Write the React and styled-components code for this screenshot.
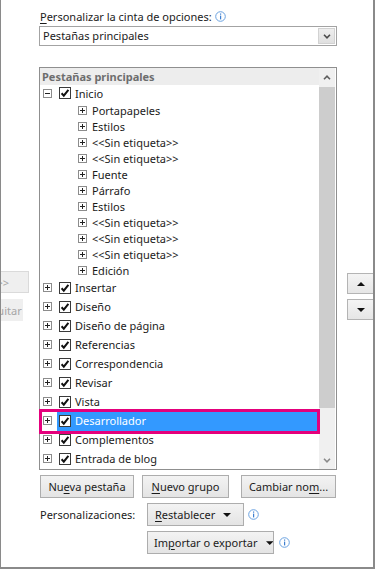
import styled, { createGlobalStyle } from "styled-components";

const GlobalStyle = createGlobalStyle`
  html, body { margin: 0; padding: 0; background: #fff; }
  body {
    font-family: "Noto Sans", "Open Sans", sans-serif;
    font-size: 11px;
    color: #1b1b1b;
  }
  * { box-sizing: border-box; }
`;

const Frame = styled.div`
  width: 375px;
  height: 569px;
  border-left: 1px solid #8a8a8a;
  border-right: 2px solid #8a8a8a;
  border-bottom: 2px solid #8a8a8a;
  display: grid;
  grid-template-columns: 28px 298px 26px;
  column-gap: 10px;
  overflow: hidden;
`;

const SideColumn = styled.div`
  display: flex;
  flex-direction: column;
  align-items: ${(p) => p.$align};
  gap: ${(p) => p.$gap}px;
  padding-top: ${(p) => p.$top}px;
  min-width: 0;
`;

const CutButton = styled.div`
  flex-shrink: 0;
  width: ${(p) => p.$w}px;
  height: 22px;
  margin-right: ${(p) => p.$mr || 0}px;
  display: flex;
  align-items: center;
  justify-content: center;
  white-space: nowrap;
  background: #efefef;
  border: 1px solid ${(p) => (p.$bare ? "#efefef" : "#dadada")};
  color: #a6a6a6;
`;

const ArrowButton = styled.div`
  width: 27px;
  height: 21px;
  display: flex;
  align-items: center;
  justify-content: center;
  background: linear-gradient(#f4f4f4, #e6e6e6);
  border: 1px solid #b4b4b4;
`;

const Main = styled.div`
  display: flex;
  flex-direction: column;
  padding-top: 8px;
  min-width: 0;
`;

const Label = styled.div`
  display: flex;
  align-items: center;
  gap: 3px;
  height: 16px;
  padding-left: 1px;
`;

const Key = styled.u`
  text-decoration: underline;
  text-underline-offset: 2px;
`;

const Dropdown = styled.div`
  margin-top: 2px;
  height: 20px;
  border: 1px solid #a3a3a3;
  display: flex;
`;

const DropdownText = styled.div`
  flex: 1;
  padding-left: 3px;
  line-height: 18px;
`;

const DropdownArrow = styled.div`
  width: 17px;
  margin: 1px;
  display: flex;
  align-items: center;
  justify-content: center;
  background: linear-gradient(#eeeeee, #e0e0e0);
  border: 1px solid #d2d2d2;
`;

const ListBox = styled.div`
  margin-top: 21px;
  height: 403px;
  border: 1px solid #8f8f8f;
  display: flex;
`;

const Tree = styled.div`
  flex: 1;
  display: flex;
  flex-direction: column;
  min-width: 0;
`;

const TreeHeader = styled.div`
  height: 17px;
  line-height: 17px;
  padding-left: 2px;
  background: #ededed;
  color: #6d6d6d;
  font-weight: 700;
`;

const TabRow = styled.div`
  position: relative;
  display: flex;
  height: ${(p) => p.$h}px;
  flex-shrink: 0;
`;

const ToggleSlot = styled.div`
  width: 17px;
  padding: 0 0 2px 3px;
  display: flex;
  align-items: center;
`;

const SelectArea = styled.div`
  flex: 1;
  display: flex;
  align-items: center;
  gap: 4px;
  padding: 0 0 2px 2px;
  background: ${(p) => (p.$selected ? "#3399ff" : "transparent")};
  color: ${(p) => (p.$selected ? "#fff" : "inherit")};
`;

const GroupRow = styled.div`
  display: flex;
  align-items: center;
  gap: 5px;
  height: 16px;
  flex-shrink: 0;
  padding: 0 0 1px 38px;
`;

const Highlight = styled.div`
  position: absolute;
  top: -3px;
  bottom: -3px;
  left: -1px;
  right: -1px;
  border: 3px solid #e4007c;
  pointer-events: none;
`;

const Scrollbar = styled.div`
  width: 16px;
  margin-right: 1px;
  display: flex;
  flex-direction: column;
  background: #f0f0f0;
`;

const ScrollCell = styled.div`
  height: ${(p) => p.$h}px;
  display: flex;
  align-items: center;
  justify-content: center;
  flex-shrink: 0;
`;

const Thumb = styled.div`
  height: 321px;
  margin-top: 1px;
  background: #cdcdcd;
`;

const Spacer = styled.div`
  flex: 1;
`;

const ButtonRow = styled.div`
  margin-top: 5px;
  display: flex;
  gap: 8px;
  padding: 0 1px;
`;

const Button = styled.button`
  width: ${(p) => p.$w}px;
  height: 23px;
  margin-left: ${(p) => (p.$push ? "auto" : "0")};
  padding: 0 0 0 ${(p) => p.$pad || 0}px;
  display: flex;
  align-items: center;
  justify-content: ${(p) => (p.$pad ? "flex-start" : "center")};
  gap: 8px;
  font: inherit;
  color: #1b1b1b;
  white-space: nowrap;
  background: linear-gradient(#f3f3f3, #e4e4e4);
  border: 1px solid #adadad;
  border-radius: 0;
`;

const Customize = styled.div`
  margin-top: 5px;
  display: grid;
  grid-template-columns: 108px auto;
  row-gap: 5px;
  align-items: center;
`;

const CustomizeLabel = styled.div`
  padding-left: 1px;
`;

const Group = styled.div`
  display: flex;
  align-items: center;
  gap: ${(p) => p.$gap}px;
`;

const InfoIcon = () => (
  <svg width="11" height="11" viewBox="0 0 11 11">
    <circle cx="5.5" cy="5.5" r="4.8" fill="#fff" stroke="#6aa2e0" />
    <rect x="5" y="2.5" width="1.2" height="1.2" fill="#3d7fd0" />
    <rect x="5" y="4.6" width="1.2" height="3.8" fill="#3d7fd0" />
  </svg>
);

const Expander = ({ minus }) => (
  <svg width="9" height="9" viewBox="0 0 9 9">
    <rect x="0.5" y="0.5" width="8" height="8" fill="#fff" stroke="#8c8c8c" />
    <path d={minus ? "M2 4.5H7" : "M2 4.5H7M4.5 2V7"} stroke="#222" strokeWidth="1" />
  </svg>
);

const Check = () => (
  <svg width="12" height="12" viewBox="0 0 12 12">
    <rect x="0.5" y="0.5" width="11" height="11" fill="#fff" stroke="#3a3a3a" />
    <path d="M2.6 6.2L4.8 8.6L9.4 2.8" fill="none" stroke="#111" strokeWidth="2" />
  </svg>
);

const Chevron = ({ up, color }) => (
  <svg width="8" height="5" viewBox="0 0 8 5">
    <path
      d={up ? "M1 4.2L4 1.2L7 4.2" : "M1 0.8L4 3.8L7 0.8"}
      fill="none"
      stroke={color}
      strokeWidth="1.6"
    />
  </svg>
);

const Triangle = ({ up }) => (
  <svg width="8" height="4" viewBox="0 0 8 4">
    <polygon points={up ? "0,4 8,4 4,0" : "0,0 8,0 4,4"} fill="#111" />
  </svg>
);

const groups = [
  "Portapapeles",
  "Estilos",
  "<<Sin etiqueta>>",
  "<<Sin etiqueta>>",
  "Fuente",
  "Párrafo",
  "Estilos",
  "<<Sin etiqueta>>",
  "<<Sin etiqueta>>",
  "<<Sin etiqueta>>",
  "Edición",
];

const tabs = [
  "Insertar",
  "Diseño",
  "Diseño de página",
  "Referencias",
  "Correspondencia",
  "Revisar",
  "Vista",
  "Desarrollador",
  "Complementos",
  "Entrada de blog",
];

const Tab = ({ name, height, minus, selected }) => (
  <TabRow $h={height}>
    <ToggleSlot>
      <Expander minus={minus} />
    </ToggleSlot>
    <SelectArea $selected={selected}>
      <Check />
      <span>{name}</span>
    </SelectArea>
    {selected && <Highlight />}
  </TabRow>
);

export default function App() {
  return (
    <>
      <GlobalStyle />
      <Frame>
        <SideColumn $align="flex-end" $gap={6} $top={271}>
          <CutButton $w={97}>Agregar &gt;&gt;</CutButton>
          <CutButton $w={51} $mr={6} $bare>
            &lt;&lt; Quitar
          </CutButton>
        </SideColumn>

        <Main>
          <Label>
            <span>
              <Key>P</Key>ersonalizar la cinta de opciones:
            </span>
            <InfoIcon />
          </Label>
          <Dropdown>
            <DropdownText>Pestañas principales</DropdownText>
            <DropdownArrow>
              <Chevron color="#4a4a4a" />
            </DropdownArrow>
          </Dropdown>

          <ListBox>
            <Tree>
              <TreeHeader>Pestañas principales</TreeHeader>
              <Tab name="Inicio" height={18} minus />
              {groups.map((g, i) => (
                <GroupRow key={i}>
                  <Expander />
                  <span>{g}</span>
                </GroupRow>
              ))}
              {tabs.map((t) => (
                <Tab key={t} name={t} height={19} selected={t === "Desarrollador"} />
              ))}
            </Tree>
            <Scrollbar>
              <ScrollCell $h={18}>
                <Chevron up color="#5e5e5e" />
              </ScrollCell>
              <Thumb />
              <Spacer />
              <ScrollCell $h={17}>
                <Chevron color="#8a8a8a" />
              </ScrollCell>
            </Scrollbar>
          </ListBox>

          <ButtonRow>
            <Button $w={94}>
              <span>
                Nu<Key>e</Key>va pestaña
              </span>
            </Button>
            <Button $w={87}>
              <span>
                <Key>N</Key>uevo grupo
              </span>
            </Button>
            <Button $w={95} $push>
              <span>
                Cambiar no<Key>m</Key>...
              </span>
            </Button>
          </ButtonRow>

          <Customize>
            <CustomizeLabel>Personalizaciones:</CustomizeLabel>
            <Group $gap={4}>
              <Button $w={97} $pad={7}>
                <span>
                  <Key>R</Key>establecer
                </span>
                <Triangle />
              </Button>
              <InfoIcon />
            </Group>
            <span />
            <Group $gap={5}>
              <Button $w={127} $pad={6}>
                <span>
                  Im<Key>p</Key>ortar o exportar
                </span>
                <Triangle />
              </Button>
              <InfoIcon />
            </Group>
          </Customize>
        </Main>

        <SideColumn $align="flex-start" $gap={5} $top={273}>
          <ArrowButton>
            <Triangle up />
          </ArrowButton>
          <ArrowButton>
            <Triangle />
          </ArrowButton>
        </SideColumn>
      </Frame>
    </>
  );
}
